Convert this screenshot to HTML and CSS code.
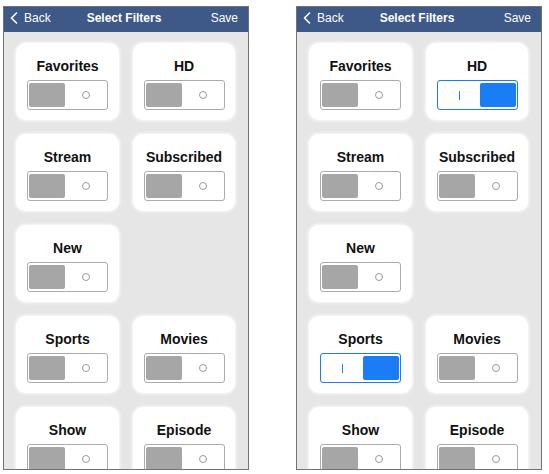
FILE: index.html
```html
<!DOCTYPE html>
<html lang="en">
<head>
  <meta charset="UTF-8">
  <meta name="viewport" content="width=device-width, initial-scale=1.0">
  <title>Select Filters</title>
  <link rel="stylesheet" href="styles.css">
</head>
<body>
  <div class="screens">
    <!-- before: everything off -->
    <div class="phone">
      <div class="nav-bar">
        <span class="nav-back">
          <svg class="chevron" width="8" height="12" viewBox="0 0 8 12"><polyline points="6.5,1 1.5,6 6.5,11" /></svg>
          Back
        </span>
        <span class="nav-title">Select Filters</span>
        <span class="nav-save">Save</span>
      </div>
      <div class="filters">
        <div class="filter-card"><div class="filter-name">Favorites</div><div class="toggle"><span class="knob"></span><span class="dot"></span></div></div>
        <div class="filter-card"><div class="filter-name">HD</div><div class="toggle"><span class="knob"></span><span class="dot"></span></div></div>
        <div class="filter-card"><div class="filter-name">Stream</div><div class="toggle"><span class="knob"></span><span class="dot"></span></div></div>
        <div class="filter-card"><div class="filter-name">Subscribed</div><div class="toggle"><span class="knob"></span><span class="dot"></span></div></div>
        <div class="filter-card"><div class="filter-name">New</div><div class="toggle"><span class="knob"></span><span class="dot"></span></div></div>
        <div class="filter-card new-row"><div class="filter-name">Sports</div><div class="toggle"><span class="knob"></span><span class="dot"></span></div></div>
        <div class="filter-card"><div class="filter-name">Movies</div><div class="toggle"><span class="knob"></span><span class="dot"></span></div></div>
        <div class="filter-card"><div class="filter-name">Show</div><div class="toggle"><span class="knob"></span><span class="dot"></span></div></div>
        <div class="filter-card"><div class="filter-name">Episode</div><div class="toggle"><span class="knob"></span><span class="dot"></span></div></div>
      </div>
    </div>

    <!-- after: HD and Sports switched on -->
    <div class="phone">
      <div class="nav-bar">
        <span class="nav-back">
          <svg class="chevron" width="8" height="12" viewBox="0 0 8 12"><polyline points="6.5,1 1.5,6 6.5,11" /></svg>
          Back
        </span>
        <span class="nav-title">Select Filters</span>
        <span class="nav-save">Save</span>
      </div>
      <div class="filters">
        <div class="filter-card"><div class="filter-name">Favorites</div><div class="toggle"><span class="knob"></span><span class="dot"></span></div></div>
        <div class="filter-card"><div class="filter-name">HD</div><div class="toggle on"><span class="bar"></span><span class="knob"></span></div></div>
        <div class="filter-card"><div class="filter-name">Stream</div><div class="toggle"><span class="knob"></span><span class="dot"></span></div></div>
        <div class="filter-card"><div class="filter-name">Subscribed</div><div class="toggle"><span class="knob"></span><span class="dot"></span></div></div>
        <div class="filter-card"><div class="filter-name">New</div><div class="toggle"><span class="knob"></span><span class="dot"></span></div></div>
        <div class="filter-card new-row"><div class="filter-name">Sports</div><div class="toggle on"><span class="bar"></span><span class="knob"></span></div></div>
        <div class="filter-card"><div class="filter-name">Movies</div><div class="toggle"><span class="knob"></span><span class="dot"></span></div></div>
        <div class="filter-card"><div class="filter-name">Show</div><div class="toggle"><span class="knob"></span><span class="dot"></span></div></div>
        <div class="filter-card"><div class="filter-name">Episode</div><div class="toggle"><span class="knob"></span><span class="dot"></span></div></div>
      </div>
    </div>
  </div>
</body>
</html>
```

FILE: styles.css
```css
body {
  margin: 0;
  background-color: #fff;
  font-family: "Liberation Sans", Arial, sans-serif;
}

.screens {
  display: flex;
  gap: 47px;
  padding: 6px 0 0 3px;
}

.phone {
  width: 244px;
  height: 462px;
  border: 1px solid #737373;
  background-color: #e6e6e6;
  overflow: hidden;
  display: flex;
  flex-direction: column;
}

.nav-bar {
  flex: none;
  height: 22px;
  display: grid;
  grid-template-columns: 1fr auto 1fr;
  align-items: center;
  padding: 0 10px 3px 6px;
  background-color: #3e5987;
  color: #fff;
  font-size: 12px;
}

.nav-back {
  display: flex;
  align-items: center;
  gap: 6px;
}

.chevron polyline {
  fill: none;
  stroke: #fff;
  stroke-width: 1.6;
  stroke-linecap: round;
  stroke-linejoin: round;
}

.nav-title {
  font-weight: bold;
}

.nav-save {
  justify-self: end;
}

.filters {
  display: grid;
  grid-template-columns: 103px 102px;
  grid-auto-rows: 77px;
  column-gap: 14px;
  row-gap: 14px;
  padding: 11px 12px 0;
}

.filter-card {
  display: flex;
  flex-direction: column;
  align-items: center;
  background-color: #fff;
  border-radius: 10px;
  box-shadow: 0 0 3px 1px #fafafa;
}

.filter-card.new-row {
  grid-column: 1;
}

.filter-name {
  margin-top: 14px;
  line-height: 18px;
  font-size: 14px;
  font-weight: bold;
  color: #111;
}

.toggle {
  margin-top: 5px;
  width: 77px;
  height: 26px;
  padding: 1px;
  border: 1px solid #ababab;
  border-radius: 3px;
  display: flex;
  align-items: center;
}

.toggle .knob {
  width: 36px;
  height: 24px;
  border-radius: 2px;
  background-color: #a6a6a6;
}

.toggle .dot {
  width: 8px;
  height: 8px;
  margin-left: 17px;
  border: 1px solid #9a9a9a;
  border-radius: 50%;
  box-sizing: border-box;
}

.toggle.on {
  border-color: #1c7bf0;
  justify-content: flex-end;
}

.toggle.on .knob {
  background-color: #1a7df6;
}

.toggle.on .bar {
  width: 1px;
  height: 9px;
  margin-right: 20px;
  background-color: #1c7bf0;
}
```
